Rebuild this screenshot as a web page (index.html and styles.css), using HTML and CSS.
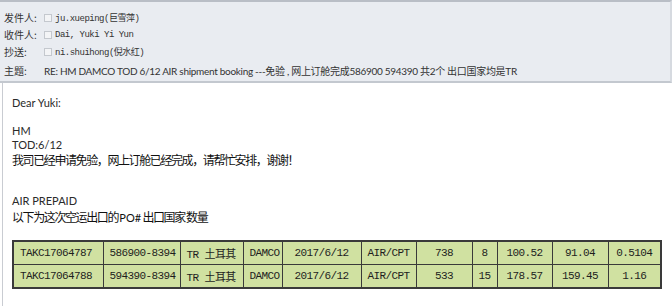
FILE: index.html
```html
<!DOCTYPE html>
<html lang="zh-CN">
<head>
    <meta charset="UTF-8">
    <title>RE: HM DAMCO TOD 6/12 AIR shipment booking</title>
    <link rel="stylesheet" href="styles.css">
</head>
<body>
    <div class="mail">
        <div class="mail-head">
            <div class="head-row">
                <span class="label">发件人:</span>
                <span class="value"><i class="box"></i>ju.xueping(巨雪萍)</span>
            </div>
            <div class="head-row">
                <span class="label">收件人:</span>
                <span class="value"><i class="box"></i>Dai, Yuki Yi Yun</span>
            </div>
            <div class="head-row">
                <span class="label">抄送:</span>
                <span class="value"><i class="box"></i>ni.shuihong(倪水红)</span>
            </div>
            <div class="head-row subject">
                <span class="label">主题:</span>
                <span class="subject-text">RE: HM DAMCO TOD 6/12 AIR shipment booking ---免验 , 网上订舱完成586900 594390 共2个 出口国家均是TR</span>
            </div>
        </div>
        <div class="mail-body">
            <p class="line">Dear Yuki:</p>
            <p class="line blank"></p>
            <p class="line">HM</p>
            <p class="line">TOD:6/12</p>
            <p class="line cn">我司已经申请免验，网上订舱已经完成，请帮忙安排，谢谢！</p>
            <p class="line air">AIR PREPAID</p>
            <p class="line cn cn-second">以下为这次空运出口的 <span class="latin">PO#</span> 出口国家 数量</p>
            <table class="ship">
                <colgroup>
                    <col class="c1"><col class="c2"><col class="c3"><col class="c4">
                    <col class="c5"><col class="c6"><col class="c7"><col class="c8">
                    <col class="c9"><col class="c10"><col class="c11">
                </colgroup>
                <tr>
                    <td>TAKC17064787</td>
                    <td>586900-8394</td>
                    <td>TR 土耳其</td>
                    <td>DAMCO</td>
                    <td class="mid">2017/6/12</td>
                    <td>AIR/CPT</td>
                    <td class="mid">738</td>
                    <td class="mid">8</td>
                    <td class="mid">100.52</td>
                    <td class="mid">91.04</td>
                    <td class="mid">0.5104</td>
                </tr>
                <tr>
                    <td>TAKC17064788</td>
                    <td>594390-8394</td>
                    <td>TR 土耳其</td>
                    <td>DAMCO</td>
                    <td class="mid">2017/6/12</td>
                    <td>AIR/CPT</td>
                    <td class="mid">533</td>
                    <td class="mid">15</td>
                    <td class="mid">178.57</td>
                    <td class="mid">159.45</td>
                    <td class="mid">1.16</td>
                </tr>
            </table>
        </div>
    </div>
</body>
</html>
```

FILE: styles.css
```css
html, body {
    margin: 0;
    padding: 0;
    background: #ffffff;
}
body {
    width: 672px;
    height: 306px;
    overflow: hidden;
    font-family: "Liberation Sans", "Noto Sans CJK SC", sans-serif;
    color: #222;
}
.mail-head {
    background-color: #e9ecf1;
    border-top: 2px solid #b9bec6;
    border-right: 2px solid #d6dae0;
    border-bottom: 2px solid #c3c8cf;
    box-sizing: border-box;
    height: 83px;
    padding-top: 7px;
}
.head-row {
    display: flex;
    align-items: center;
    height: 17px;
    font-size: 11px;
}
.head-row.subject {
    margin-top: 2px;
}
.label {
    width: 40px;
    padding-left: 4px;
    color: #333;
    font-family: "Noto Sans CJK SC", sans-serif;
    font-size: 10px;
}
.value {
    display: flex;
    align-items: center;
    font-family: "Liberation Mono", "Noto Sans CJK SC", monospace;
    font-size: 9px;
    letter-spacing: -0.5px;
    color: #333;
}
.box {
    display: inline-block;
    width: 6px;
    height: 6px;
    border: 1px solid #c4c8ce;
    background: #f3f4f6;
    margin-right: 3px;
}
.subject-text {
    font-family: Lato, "Noto Sans CJK SC", sans-serif;
    font-size: 10px;
    letter-spacing: -0.3px;
    color: #333;
    white-space: nowrap;
}
.mail-body {
    border-left: 1px solid #c9ccd2;
    margin-left: 2px;
    padding: 13px 0 0 9px;
    box-sizing: border-box;
    height: 223px;
}
.line {
    margin: 0;
    height: 14px;
    line-height: 14px;
    font-family: Lato, "Noto Sans CJK SC", sans-serif;
    font-size: 11px;
    color: #2a2a2a;
}
.line.cn {
    height: 16px;
    line-height: 16px;
    font-family: "Noto Sans CJK SC", sans-serif;
    font-size: 12px;
    letter-spacing: -1.4px;
    color: #111;
}
.line.cn .latin {
    font-family: Lato, sans-serif;
    font-size: 11px;
    letter-spacing: 0;
}
.line.air {
    margin-top: 26px;
}
.line.cn-second {
    height: 18px;
    line-height: 18px;
}
.ship {
    margin-top: 14px;
    border-collapse: collapse;
    border: 2px solid #3a3a3a;
    table-layout: fixed;
    width: 648px;
    font-family: "Liberation Mono", "Noto Sans CJK SC", monospace;
    font-size: 11px;
    letter-spacing: -0.6px;
    color: #1e1e1e;
}
.ship td {
    background-color: #d0e1a1;
    border: 1px solid #3a3a3a;
    height: 22px;
    padding: 0;
    text-indent: 6px;
    white-space: nowrap;
    overflow: hidden;
}
.ship td.mid {
    text-align: center;
    text-indent: 0;
}
.c1 { width: 90px; }
.c2 { width: 77px; }
.c3 { width: 63px; }
.c4 { width: 39px; }
.c5 { width: 79px; }
.c6 { width: 55px; }
.c7 { width: 56px; }
.c8 { width: 25px; }
.c9 { width: 55px; }
.c10 { width: 56px; }
.c11 { width: 53px; }
```
